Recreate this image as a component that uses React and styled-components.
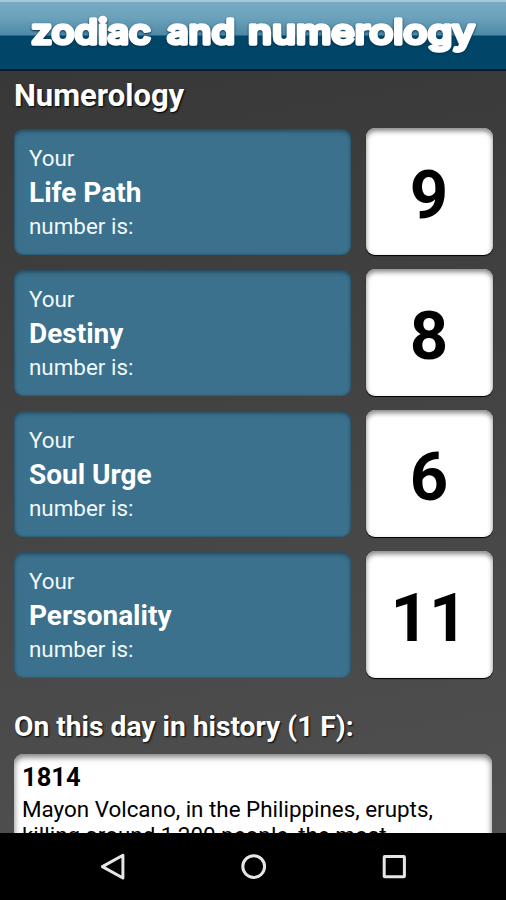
import React from 'react'
import styled, { createGlobalStyle } from 'styled-components'

const numbers = [
  { name: 'Life Path', value: 9 },
  { name: 'Destiny', value: 8 },
  { name: 'Soul Urge', value: 6 },
  { name: 'Personality', value: 11 },
];

function Logo() {
  return (
    <LogoSvg width="506" height="66" viewBox="0 0 506 66">
      <text x="31" y="42" textLength="120" lengthAdjust="spacingAndGlyphs">zodiac</text>
      <text x="167" y="42" textLength="68" lengthAdjust="spacingAndGlyphs">and</text>
      <text x="248" y="42" textLength="227" lengthAdjust="spacingAndGlyphs">numerology</text>
    </LogoSvg>
  )
}

function NumberRow({ name, value }) {
  return (
    <Row>
      <Label>
        <p>Your</p>
        <h3>{name}</h3>
        <p>number is:</p>
      </Label>
      <Value>{value}</Value>
    </Row>
  )
}

export default function App() {
  return (
    <>
      <GlobalStyle />
      <Screen>
        <Header>
          <Logo />
        </Header>
        <Content>
          <Heading>Numerology</Heading>
          <Numbers>
            {numbers.map((item) => (
              <NumberRow key={item.name} name={item.name} value={item.value} />
            ))}
          </Numbers>
          <HistoryHeading>On this day in history (1 F):</HistoryHeading>
          <History>
            <h4>1814</h4>
            <p>Mayon Volcano, in the Philippines, erupts,</p>
            <p>killing around 1,200 people, the most</p>
          </History>
        </Content>
        <NavBar>
          <svg width="26" height="30" viewBox="0 0 26 30">
            <path d="M23.9 3.2V26L3.4 14.6Z" />
          </svg>
          <svg width="28" height="30" viewBox="0 0 28 30">
            <circle cx="14.7" cy="14.6" r="10.9" />
          </svg>
          <svg width="26" height="30" viewBox="0 0 26 30">
            <rect x="3.2" y="4.6" width="20.2" height="20.2" rx="0.6" />
          </svg>
        </NavBar>
      </Screen>
    </>
  )
}

const GlobalStyle = createGlobalStyle`
  * {
    box-sizing: border-box;
  }
  body, h1, h2, h3, h4, p {
    margin: 0;
  }
  body {
    background-color: #000;
    font-family: Roboto, sans-serif;
  }
`;

const Screen = styled.div`
  display: flex;
  flex-direction: column;
  width: 506px;
  height: 900px;
  overflow: hidden;
`;

const Header = styled.header`
  flex: none;
  height: 71px;
  border-top: 2px solid #a6cadb;
  border-bottom: 2px solid #071c2b;
  background: linear-gradient(#78aac3 0, #6ba1ba 16px, #4d89a7 33px, #014669 34px, #014669 100%);
`;

const LogoSvg = styled.svg`
  display: block;
  filter: drop-shadow(0 1px 1px #01304d);
  text {
    fill: #fff;
    stroke: #fff;
    stroke-width: 3.6px;
    stroke-linejoin: round;
    font-family: Inter, sans-serif;
    font-weight: 500;
    font-size: 34px;
  }
`;

const Content = styled.main`
  flex: 1;
  min-height: 0;
  display: flex;
  flex-direction: column;
  overflow: hidden;
  padding: 0 14px;
  background: linear-gradient(170deg, #383838, #505050);
`;

const Heading = styled.h2`
  flex: none;
  color: #fff;
  font-size: 31px;
  line-height: 36px;
  margin-top: 7px;
  text-shadow: 1px 1px 2px #000;
  white-space: nowrap;
`;

const HistoryHeading = styled(Heading)`
  font-size: 28.2px;
  margin-top: 31px;
`;

const Numbers = styled.div`
  display: grid;
  gap: 14px;
  margin-top: 14px;
`;

const Row = styled.section`
  display: grid;
  grid-template-columns: 337px 127px;
  grid-template-rows: 127px;
  gap: 14.5px;
`;

const Label = styled.div`
  margin-top: 1px;
  border-radius: 9px;
  padding: 15px 15px 0;
  color: #f1f9fd;
  background-color: #3b718d;
  box-shadow: inset 0 3px 4px -1px #24485b, inset 0 0 3px #24485b;
  p {
    font-size: 22.4px;
    line-height: 28px;
  }
  h3 {
    color: #fff;
    font-size: 28px;
    line-height: 40px;
    padding-top: 1px;
    margin-bottom: -1px;
  }
`;

const Value = styled.div`
  display: flex;
  align-items: center;
  justify-content: center;
  border-radius: 9px;
  padding-top: 6px;
  color: #000;
  background-color: #fff;
  font-size: 67px;
  font-weight: 700;
  box-shadow: inset 0 3px 5px #858585, 0 1px 1px #000;
`;

const History = styled.section`
  flex: none;
  height: 150px;
  margin-top: 9px;
  padding: 8px 8px;
  border-radius: 9px;
  color: #000;
  background-color: #fff;
  box-shadow: inset 0 3px 6px #757575;
  white-space: nowrap;
  h4 {
    font-size: 25.5px;
    line-height: 30px;
    margin-bottom: 4px;
  }
  p {
    font-size: 22.4px;
    line-height: 26px;
  }
`;

const NavBar = styled.nav`
  flex: none;
  display: flex;
  justify-content: space-between;
  align-items: center;
  height: 67px;
  padding: 0 99px;
  background-color: #000;
  svg {
    fill: none;
    stroke: #e6e6e6;
    stroke-width: 3;
    stroke-linejoin: round;
  }
`;
